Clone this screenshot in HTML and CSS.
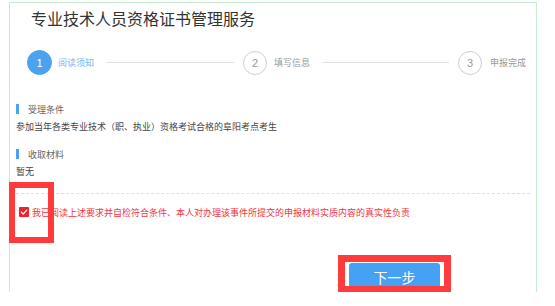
FILE: index.html
```html
<!DOCTYPE html>
<html lang="zh-CN">
<head>
<meta charset="utf-8">
<title>专业技术人员资格证书管理服务</title>
<link rel="stylesheet" href="styles.css">
</head>
<body>
<div class="panel">
  <h1 class="title">专业技术人员资格证书管理服务</h1>
  <div class="steps">
    <span class="circle active">1</span>
    <span class="step-label active-label">阅读须知</span>
    <span class="step-line line1"></span>
    <span class="circle c2">2</span>
    <span class="step-label l2">填写信息</span>
    <span class="step-line line2"></span>
    <span class="circle c3">3</span>
    <span class="step-label l3">申报完成</span>
  </div>
  <div class="sec-head first"><span class="bar"></span><span>受理条件</span></div>
  <p class="sec-text">参加当年各类专业技术（职、执业）资格考试合格的阜阳考点考生</p>
  <div class="sec-head second"><span class="bar"></span><span>收取材料</span></div>
  <p class="sec-text">暂无</p>
  <div class="dashed"></div>
  <label class="agree">
    <span class="check"><svg width="10" height="10" viewBox="0 0 10 10"><path d="M2.3 5.1 L4.2 7 L7.8 3.2" fill="none" stroke="#fff" stroke-width="1.2" stroke-linecap="round" stroke-linejoin="round"/></svg></span>
    <span class="agree-text">我已阅读上述要求并自检符合条件、本人对办理该事件所提交的申报材料实质内容的真实性负责</span>
  </label>
  <button class="next" type="button">下一步</button>
</div>
<div class="mark mark-check"></div>
<div class="mark mark-btn"></div>
</body>
</html>
```

FILE: styles.css
```css
html, body {
  margin: 0;
  padding: 0;
  background: #fff;
}
body {
  font-family: "Noto Sans CJK SC", "Noto Sans", sans-serif;
  color: #333;
  position: relative;
  width: 555px;
  height: 306px;
  overflow: hidden;
}
.panel {
  margin: 2px 0 0 9px;
  width: 528px;
  height: 290px;
  box-sizing: border-box;
  border: 1px solid #c6ecce;
  border-bottom: none;
  padding: 0 6px;
}
.title {
  margin: 4px 0 0 15px;
  font-size: 16px;
  line-height: 22px;
  font-weight: normal;
  color: #333;
  letter-spacing: 0;
}
.steps {
  margin: 21px 0 0 11px;
  height: 25px;
  display: flex;
  align-items: center;
}
.circle {
  box-sizing: border-box;
  width: 24px;
  height: 24px;
  border-radius: 50%;
  border: 1px solid #cfcfcf;
  color: #9a9a9a;
  font-size: 11px;
  display: flex;
  align-items: center;
  justify-content: center;
  flex: none;
  font-family: "Liberation Sans", sans-serif;
}
.circle.active {
  width: 25px;
  height: 25px;
  background: #4ba2ee;
  border-color: #4ba2ee;
  color: #fff;
}
.step-label {
  font-size: 9px;
  line-height: 12px;
  color: #999;
  flex: none;
}
.active-label {
  margin-left: 6px;
  color: #7db6ee;
}
.step-line {
  height: 1px;
  background: #e2e2e2;
  flex: none;
}
.line1 { margin-left: 12px; width: 128px; }
.c2 { margin-left: 9px; }
.l2 { margin-left: 7px; }
.line2 { margin-left: 12px; width: 127px; }
.c3 { margin-left: 9px; }
.l3 { margin-left: 8px; }

.sec-head {
  height: 14px;
  display: flex;
  align-items: center;
  font-size: 9px;
  color: #666;
}
.sec-head.first { margin-top: 27px; }
.sec-head.second { margin-top: 13px; }
.bar {
  width: 3px;
  height: 10px;
  background: #4ba2ee;
  margin-right: 9px;
}
.sec-text {
  margin: 4px 0 0;
  font-size: 9px;
  line-height: 14px;
  color: #444;
}
.dashed {
  margin-top: 14px;
  border-top: 1px dashed #e0e0e0;
}
.agree {
  margin: 11px 0 0 3px;
  height: 14px;
  display: flex;
  align-items: center;
}
.check {
  width: 10px;
  height: 10px;
  background: #f0222f;
  border-radius: 1px;
  display: flex;
  flex: none;
}
.agree-text {
  margin-left: 3px;
  font-size: 9px;
  color: #f03545;
  white-space: nowrap;
}
.next {
  display: block;
  margin: 44px 0 0 333px;
  width: 91px;
  height: 28px;
  border: none;
  border-radius: 3px;
  background: #45a1f3;
  color: #fff;
  font-family: "Noto Sans CJK SC", sans-serif;
  font-size: 14px;
  padding: 0;
}
.mark {
  position: absolute;
  box-sizing: border-box;
  border: 6px solid #ff3b3b;
}
.mark-check {
  left: 9px;
  top: 182px;
  width: 45px;
  height: 61px;
}
.mark-btn {
  left: 338px;
  top: 255px;
  width: 113px;
  height: 37px;
  border-width: 7px 7px 6px 7px;
}
```
